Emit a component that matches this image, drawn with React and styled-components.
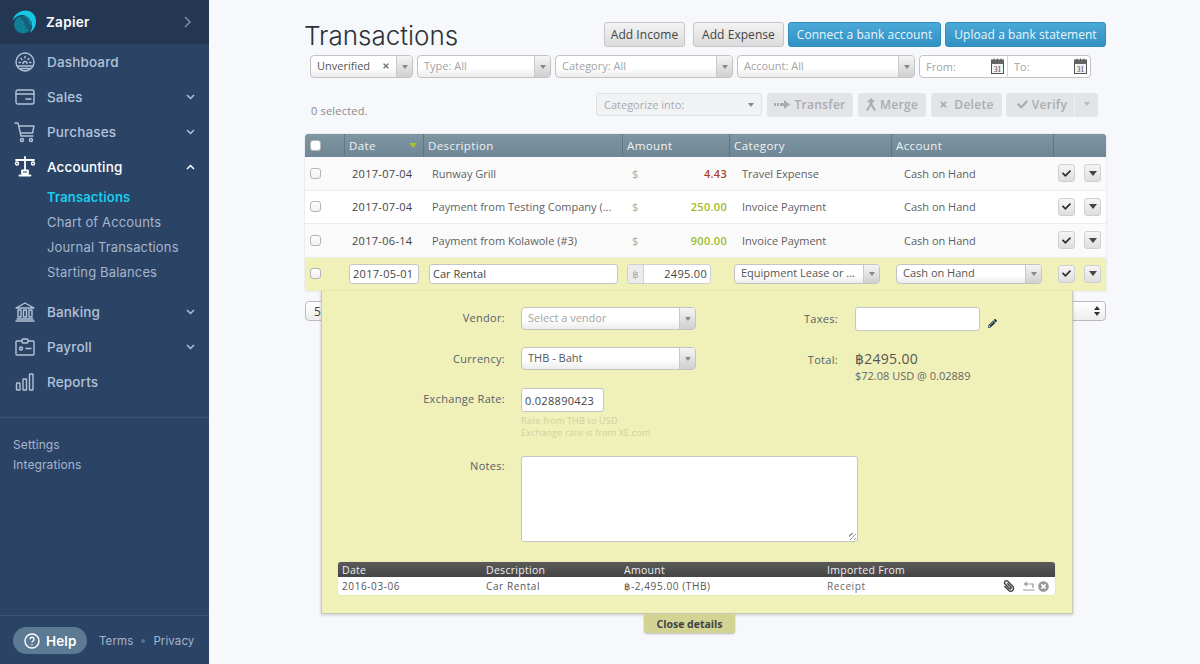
import React from 'react'
import styled, { createGlobalStyle } from 'styled-components'
import { FaCheck, FaTimes, FaPencilAlt, FaPaperclip, FaTimesCircle } from 'react-icons/fa'

const GlobalStyle = createGlobalStyle`
  html, body { margin: 0; padding: 0; height: 100%; overflow: hidden; }
  body { background: #f7f8fb; font-family: 'Open Sans', 'DejaVu Sans', sans-serif; font-size: 11px; color: #555; }
  #root { height: 100%; }
  * { box-sizing: border-box; }
`

const Page = styled.div`
  display: flex;
  width: 1200px;
  height: 664px;
`

/* sidebar */
const Sidebar = styled.aside`
  width: 209px;
  flex: none;
  display: flex;
  flex-direction: column;
  background: #2b4466;
  font-family: 'Inter', sans-serif;
  color: #b3c2d8;
`
const Brand = styled.div`
  height: 44px;
  padding: 0 17px 0 12px;
  display: flex;
  align-items: center;
  gap: 10px;
  background: #233753;
  color: #fff;
  font-size: 13.5px;
  font-weight: 600;
  letter-spacing: .3px;
  svg:last-child { margin-left: auto; }
`
const NavItem = styled.div`
  height: 35px;
  padding: 0 14px 0 14px;
  display: flex;
  align-items: center;
  font-size: 13.5px;
  font-weight: 500;
  letter-spacing: .15px;
  color: ${p => (p.$active ? '#fff' : '#b3c2d8')};
  svg:last-child:not(:first-child) { margin-left: auto; }
`
const NavIcon = styled.span`
  width: 22px;
  margin-right: 11px;
  display: flex;
  justify-content: center;
`
const SubItem = styled.div`
  height: 25px;
  padding-left: 47px;
  display: flex;
  align-items: center;
  font-size: 13px;
  letter-spacing: .15px;
  font-weight: ${p => (p.$active ? 600 : 400)};
  color: ${p => (p.$active ? '#17cfee' : '#a5b5cc')};
`
const SubList = styled.div`
  margin-bottom: 10px;
`
const NavTop = styled.nav`
  padding-top: .5px;
`
const Secondary = styled.div`
  margin-top: 17px;
  padding: 17px 0 0 13px;
  border-top: 1px solid #3a5476;
  font-size: 12px;
  line-height: 20px;
  letter-spacing: .1px;
  color: #a5b5cc;
`
const SideFooter = styled.div`
  margin-top: auto;
  height: 49px;
  padding: 11px 0 0 13px;
  border-top: 1px solid #3a5476;
  display: flex;
  align-items: flex-start;
  font-size: 11.5px;
  letter-spacing: .1px;
  color: #a5b5cc;
`
const HelpPill = styled.div`
  width: 74px;
  height: 27px;
  border-radius: 14px;
  background: #5c7a94;
  color: #fff;
  font-size: 13.5px;
  font-weight: 600;
  display: flex;
  align-items: center;
  gap: 6px;
  padding-left: 11px;
  margin-right: 12px;
`
const FootLinks = styled.div`
  height: 27px;
  display: flex;
  align-items: center;
  gap: 8px;
  i { width: 4px; height: 4px; border-radius: 50%; background: #56708f; }
`

/* main column */
const Main = styled.main`
  flex: 1;
  padding: 22px 94px 0 96px;
`
const TitleRow = styled.div`
  height: 25px;
  display: flex;
  align-items: center;
`
const Title = styled.h1`
  margin: 0 auto 0 -1px;
  font-family: 'Inter', sans-serif;
  font-weight: 300;
  font-size: 26px;
  color: #2b3138;
  line-height: 25px;
  position: relative;
  top: 1px;
`
const Button = styled.button`
  height: 25px;
  width: ${p => p.$w}px;
  margin-left: ${p => p.$ml ?? 4}px;
  padding: 0;
  border-radius: 3px;
  font: 12px 'Open Sans', sans-serif;
  letter-spacing: .05px;
  white-space: nowrap;
  color: ${p => (p.$blue ? '#eaf6fc' : '#444')};
  border: 1px solid ${p => (p.$blue ? '#2f8fbf' : '#c6c6c6')};
  background: ${p => (p.$blue ? 'linear-gradient(#4aa9d8, #3191c4)' : 'linear-gradient(#f3f3f3, #dcdcdc)')};
`
const FilterRow = styled.div`
  margin-top: 8px;
  padding-left: 5px;
  height: 23px;
  display: flex;
  gap: 4px;
`
const SelectBox = styled.div`
  width: ${p => p.$w}px;
  height: ${p => p.$h ?? 23}px;
  flex: none;
  display: flex;
  align-items: stretch;
  border: 1px solid #c3c3c3;
  border-radius: 4px;
  overflow: hidden;
  background: linear-gradient(#fff 55%, #ececec);
  font-size: 11px;
  color: ${p => (p.$muted ? '#a3a3a3' : '#555')};
`
const SelectText = styled.span`
  flex: 1;
  min-width: 0;
  padding: 0 0 2px 6px;
  display: flex;
  align-items: center;
  white-space: nowrap;
  svg { margin-left: auto; margin-right: 6px; color: #777; }
`
const SelectArrow = styled.span`
  width: 16px;
  flex: none;
  display: flex;
  align-items: center;
  justify-content: center;
  border-left: 1px solid #c9c9c9;
  background: linear-gradient(#f5f5f5, #cfcfcf);
  &::after {
    content: '';
    border: 3px solid transparent;
    border-top: 4px solid #888;
    border-bottom: 0;
  }
`
const DateRange = styled.div`
  width: 172px;
  height: 23px;
  display: grid;
  grid-template-columns: 87px 1fr;
  border: 1px solid #c3c3c3;
  border-radius: 4px;
  background: #fff;
  color: #a3a3a3;
`
const DateCell = styled.span`
  display: flex;
  align-items: center;
  justify-content: space-between;
  padding: 0 3px 1px 6px;
  & + & { border-left: 1px solid #d5d5d5; }
`
const Toolbar = styled.div`
  margin-top: 14px;
  padding-right: 8px;
  height: 25px;
  display: flex;
  align-items: center;
`
const Selected = styled.span`
  margin: 12px auto 0 6px;
  letter-spacing: .2px;
  color: #8a8a8a;
`
const CategorizeBox = styled.div`
  width: 166px;
  height: 23px;
  display: flex;
  align-items: center;
  justify-content: space-between;
  padding: 0 7px;
  border: 1px solid #e0e1e3;
  border-radius: 3px;
  background: #f1f2f4;
  color: #a9abad;
  &::after {
    content: '';
    border: 3px solid transparent;
    border-top: 4px solid #888;
    border-bottom: 0;
  }
`
const GhostButton = styled.div`
  width: ${p => p.$w}px;
  height: 24px;
  margin-left: ${p => p.$ml ?? 5}px;
  padding: 0 0 1px ${p => p.$pl ?? 0}px;
  display: flex;
  align-items: center;
  justify-content: center;
  gap: ${p => p.$gap ?? 4}px;
  background: #e3e4e7;
  border-radius: ${p => p.$radius ?? '3px'};
  border-left: ${p => (p.$split ? '1px solid #eeeff1' : '0')};
  font-size: 12px;
  font-weight: 600;
  letter-spacing: .3px;
  color: #a8acb0;
  i {
    border: 3px solid transparent;
    border-top: 4px solid #b5b8bc;
    border-bottom: 0;
  }
`

/* transactions table */
const COLUMNS = '39px 79px 199px 107px 162px 162px 53px'

const TableWrap = styled.div`
  margin-top: 17px;
`
const TableBlock = styled.div`
  position: relative;
`
const Table = styled.div`
  border-radius: 4px 4px 0 4px;
  overflow: hidden;
  box-shadow: 0 0 2px rgba(0, 0, 0, .18);
`
const HeadRow = styled.div`
  display: grid;
  grid-template-columns: ${COLUMNS};
  height: 23px;
  background-color: #748b99;
  background-image:
    repeating-linear-gradient(90deg, rgba(255, 255, 255, .04) 0 1px, transparent 1px 2px),
    linear-gradient(#7c93a0, #6c8493);
  color: #eef2f4;
  font-size: 11.5px;
  letter-spacing: .4px;
`
const HeadCell = styled.div`
  display: flex;
  align-items: center;
  justify-content: space-between;
  padding: 0 6px 0 4px;
  &:first-child { padding-left: 5px; }
  & + & { border-left: 1px solid #5f7787; }
  i {
    border: 4px solid transparent;
    border-top: 5px solid #a5c52c;
    border-bottom: 0;
  }
`
const Row = styled.div`
  display: grid;
  grid-template-columns: ${COLUMNS};
  height: 33.5px;
  align-items: center;
  background: ${p => (p.$edit ? '#f0f1b8' : p.$odd ? '#fafafa' : '#fff')};
  border-bottom: 1px solid ${p => (p.$edit ? '#f0f1b8' : '#ececec')};
  color: #5f5f5f;
`
const Check = styled.span`
  display: block;
  width: 11px;
  height: 11px;
  margin-left: ${p => p.$ml ?? 5}px;
  border: 1px solid #b5b5b5;
  border-radius: 3px;
  background: ${p => (p.$head ? '#fff' : 'linear-gradient(#fff, #f0f0f0)')};
`
const DateText = styled.span`
  padding-left: 8px;
  letter-spacing: .3px;
  color: #444;
`
const DescText = styled.span`
  padding-left: 9px;
  white-space: nowrap;
`
const AmountCell = styled.div`
  display: flex;
  justify-content: space-between;
  padding: 0 2px 0 10px;
  font-weight: 600;
  letter-spacing: .3px;
  color: ${p => p.$color};
  em { font-style: normal; font-weight: 400; color: #a9a9a9; }
`
const PlainCell = styled.span`
  padding-left: 13px;
  white-space: nowrap;
`
const ActionCell = styled.div`
  display: flex;
  gap: 9px;
  padding-left: 5px;
`
const IconButton = styled.span`
  width: 17px;
  height: 18px;
  display: flex;
  align-items: center;
  justify-content: center;
  border: 1px solid #cfcfcf;
  border-radius: 3px;
  background: linear-gradient(#f6f6f6, #dedede);
  color: #333;
  i {
    border: 4px solid transparent;
    border-top: 5px solid #444;
    border-bottom: 0;
  }
`
const TextField = styled.div`
  width: ${p => p.$w}px;
  height: ${p => p.$h ?? 20}px;
  margin-left: ${p => p.$ml ?? 0}px;
  display: flex;
  align-items: center;
  padding: 0 3px;
  background: #fff;
  border: 1px solid #c5c5c5;
  border-radius: 3px;
  font-size: 11px;
  letter-spacing: ${p => p.$ls ?? 0}px;
  color: #444;
  white-space: nowrap;
`
const AmountField = styled.div`
  width: 84px;
  height: 20px;
  margin-left: 5px;
  display: flex;
  border: 1px solid #cfcfcf;
  border-radius: 3px;
  overflow: hidden;
`
const AmountPrefix = styled.span`
  width: 16px;
  display: flex;
  align-items: center;
  justify-content: center;
  background: #ececec;
  border-right: 1px solid #cfcfcf;
  color: #aaa;
  font-size: 10px;
`
const AmountInput = styled.span`
  flex: 1;
  display: flex;
  align-items: center;
  justify-content: flex-end;
  padding-right: 3px;
  background: #fff;
  letter-spacing: .3px;
  color: #444;
`
const SelectSlot = styled.div`
  padding-left: ${p => p.$pl}px;
`

/* pagination sits under the open details panel */
const Pager = styled.div`
  margin-top: 10px;
  display: flex;
  justify-content: space-between;
`
const PagerSelect = styled.div`
  width: ${p => p.$w}px;
  height: 20px;
  display: flex;
  align-items: center;
  justify-content: ${p => (p.$end ? 'flex-end' : 'flex-start')};
  padding: 0 5px 0 8px;
  border: 1px solid #bbb;
  border-radius: 4px;
  background: linear-gradient(#fff, #ededed);
  font-size: 12px;
  color: #444;
`
const Stepper = styled.span`
  display: flex;
  flex-direction: column;
  gap: 2px;
  &::before {
    content: '';
    border: 3px solid transparent;
    border-bottom: 4px solid #333;
    border-top: 0;
  }
  &::after {
    content: '';
    border: 3px solid transparent;
    border-top: 4px solid #333;
    border-bottom: 0;
  }
`

/* details panel */
const Overlay = styled.div`
  position: absolute;
  top: 100%;
  left: 16px;
  width: 752px;
`
const Panel = styled.div`
  padding: 16px 17px 18px 16px;
  background: #f0f1b8;
  border: 1px solid #c9c9b4;
  border-top: 0;
  box-shadow: 0 1px 3px rgba(0, 0, 0, .2);
`
const Columns = styled.div`
  display: flex;
`
const LeftCol = styled.div`
  width: 424px;
`
const FormRow = styled.div`
  display: grid;
  grid-template-columns: 167px 1fr;
  column-gap: 16px;
  align-items: ${p => (p.$top ? 'start' : 'center')};
  margin-bottom: ${p => p.$mb ?? 17}px;
`
const Label = styled.label`
  text-align: right;
  font-size: 11px;
  letter-spacing: .3px;
  color: #56606a;
  padding-top: ${p => p.$pt ?? 0}px;
  padding-bottom: ${p => p.$pb ?? 0}px;
`
const Hint = styled.div`
  margin-top: 3px;
  font-size: 9px;
  line-height: 12px;
  letter-spacing: .2px;
  color: #cfd0a2;
`
const RightCol = styled.div`
  flex: 1;
`
const RightRow = styled.div`
  display: flex;
  align-items: flex-start;
  margin-bottom: ${p => p.$mb ?? 0}px;
  color: #56606a;
  font-size: 11px;
`
const RightLabel = styled.span`
  width: 76px;
  margin-right: 17px;
  flex: none;
  text-align: right;
  letter-spacing: .3px;
  padding-top: ${p => p.$pt ?? 0}px;
`
const Pencil = styled.span`
  margin: 12px 0 0 8px;
  color: #1f3550;
  display: flex;
`
const TotalBig = styled.div`
  font-size: 14px;
  line-height: 16px;
  letter-spacing: .3px;
  color: #555;
`
const TotalSmall = styled.div`
  margin-top: 2px;
  font-size: 11px;
  line-height: 14px;
  color: #666;
`
const NotesBox = styled.div`
  width: 337px;
  height: 86px;
  position: relative;
  background: #fff;
  border: 1px solid #c5c5c5;
  border-radius: 3px;
  &::after {
    content: '';
    position: absolute;
    right: 1px;
    bottom: 1px;
    width: 7px;
    height: 7px;
    background: repeating-linear-gradient(135deg, transparent 0 2px, #999 2px 3px);
  }
`
const MINI_COLUMNS = '144px 138px 203px 1fr'

const MiniTable = styled.div`
  margin-top: 20px;
  border-radius: 3px;
  overflow: hidden;
  box-shadow: 0 0 1px rgba(0, 0, 0, .25);
`
const MiniHead = styled.div`
  display: grid;
  grid-template-columns: ${MINI_COLUMNS};
  height: 15px;
  padding-left: 4px;
  align-items: center;
  background: linear-gradient(#5a5a5a, #454545);
  color: #eee;
  font-size: 10.5px;
  letter-spacing: .3px;
`
const MiniRow = styled.div`
  display: grid;
  grid-template-columns: ${MINI_COLUMNS};
  height: 18px;
  padding-left: 4px;
  align-items: center;
  background: #fff;
  font-size: 10px;
  letter-spacing: .6px;
  color: #555;
`
const ReceiptCell = styled.div`
  display: flex;
  align-items: center;
  padding-right: 6px;
  color: #666;
  span { margin-right: auto; }
  svg { flex: none; }
  svg:first-of-type { transform: scaleX(-1); margin-right: 8px; }
  svg:nth-of-type(2) { margin-right: 3px; }
`
const CloseTab = styled.div`
  width: 91px;
  height: 19px;
  margin: 0 0 0 323px;
  display: flex;
  align-items: center;
  justify-content: center;
  background: #d3d394;
  border-radius: 0 0 3px 3px;
  box-shadow: 0 1px 2px rgba(0, 0, 0, .25);
  font-size: 10.5px;
  font-weight: 700;
  color: #3e4248;
`

/* drawings */
const Stroke = ({ w = 22, h = 22, children }) => (
  <svg width={w} height={h} viewBox={`0 0 ${w} ${h}`} fill="none" stroke="currentColor" strokeWidth="1.4" strokeLinecap="round" strokeLinejoin="round">
    {children}
  </svg>
)
const Logo = () => (
  <svg width="24" height="24" viewBox="0 0 24 24">
    <circle cx="11" cy="14.500" r="9" fill="#0e7f95" />
    <path d="M7 6.500c4-1.500 8 .5 9 4 .8 3 2 5 4.500 5.500-.5 1.500-1.500 3-3 4-3-1-4.500-3.500-5-6-.5-3-3-5-5.500-7.500z" fill="#233753" opacity=".45" />
    <path d="M.5 11C2 4 8 .5 13.500.5 19.500.5 24 5 24 11c0 5.500-2.500 9.500-6.500 12 2.500-3.500 3.500-8 1.500-12C17 7 13 4.500 9 5 5.500 5.500 2.500 8 .5 11z" fill="#17c6e2" />
  </svg>
)
const Chevron = ({ up }) => (
  <svg width="9" height="6" viewBox="0 0 9 6" fill="none" stroke={up ? '#fff' : '#b3c2d8'} strokeWidth="1.500">
    <path d={up ? 'M1 5l3.500-3.500L8 5' : 'M1 1l3.500 3.500L8 1'} />
  </svg>
)
const DashboardIcon = () => (
  <Stroke>
    <circle cx="11" cy="11" r="9" />
    <path d="M4 15h14M6.500 17.500h9M11 5.500v1.500M7 7.500l1 1M15 7.500l-1 1M5 11.500h1.500M15.500 11.500H17M9 12.500a2 2 0 014 0" />
  </Stroke>
)
const SalesIcon = () => (
  <Stroke w={20} h={16}>
    <rect x="1" y="1" width="18" height="14" rx="2" />
    <path d="M1 5h18M11 10h5" />
  </Stroke>
)
const CartIcon = () => (
  <Stroke>
    <path d="M1 2h3l3 13h12M5 5h15l-1.500 7H7" />
    <circle cx="8" cy="19" r="1.500" />
    <circle cx="17" cy="19" r="1.500" />
  </Stroke>
)
const ScalesIcon = () => (
  <Stroke>
    <path d="M11 1v13M2 4h18" strokeWidth="1.800" />
    <circle cx="3" cy="7.500" r="1.500" />
    <circle cx="19" cy="7.500" r="1.500" />
    <path d="M8 14.500h6v3H8zM5.500 19.500h11" strokeWidth="1.800" />
  </Stroke>
)
const BankIcon = () => (
  <Stroke w={20} h={20}>
    <path d="M1 6l9-5 9 5zM1 19h18M2 17h16" />
    <rect x="3" y="8" width="3" height="7" />
    <rect x="8.500" y="8" width="3" height="7" />
    <rect x="14" y="8" width="3" height="7" />
  </Stroke>
)
const BadgeIcon = () => (
  <Stroke w={20} h={18}>
    <path d="M7 3H2a1 1 0 00-1 1v12a1 1 0 001 1h16a1 1 0 001-1V4a1 1 0 00-1-1h-5" />
    <rect x="7" y="1" width="6" height="4" rx="1" />
    <circle cx="6" cy="10.500" r="1.500" />
    <path d="M11 10.500h5" />
  </Stroke>
)
const BarsIcon = () => (
  <Stroke w={20} h={18}>
    <rect x="1.500" y="10" width="3.500" height="7" rx=".5" />
    <rect x="8" y="6" width="3.500" height="11" rx=".5" />
    <rect x="14.500" y="1" width="3.500" height="16" rx=".5" />
  </Stroke>
)
const CalendarIcon = () => (
  <svg width="13" height="16" viewBox="0 0 13 16">
    <rect x=".5" y="2" width="12" height="13.500" fill="#f4f4f4" stroke="#555" />
    <rect x=".5" y="2" width="12" height="4" fill="#666" />
    <path d="M3 .5v3M6.500 .5v3M10 .5v3" stroke="#555" />
    <text x="6.500" y="13.500" fontSize="7.500" fontFamily="Liberation Serif, serif" textAnchor="middle" fill="#333">31</text>
  </svg>
)
const HelpCircle = () => (
  <svg width="16" height="16" viewBox="0 0 16 16" fill="none" stroke="#fff" strokeWidth="1.400">
    <circle cx="8" cy="8" r="7" />
    <path d="M6 6.300a2 2 0 113 1.700c-.8.500-1 .9-1 1.600M8 11.300v.9" />
  </svg>
)
const TransferIcon = () => (
  <svg width="16" height="9" viewBox="0 0 16 9" fill="#a8acb0">
    <rect x="0" y="3" width="2" height="3" />
    <rect x="3" y="3" width="2" height="3" />
    <path d="M6 3h4V0l6 4.500L10 9V6H6z" />
  </svg>
)
const MergeIcon = () => (
  <svg width="10" height="13" viewBox="0 0 10 13" fill="#a8acb0">
    <path d="M5 0l4 4H6.500v2.500L10 12l-1.500 1L5 8 1.500 13 0 12l3.500-5.500V4H1z" />
  </svg>
)
const ReturnIcon = () => (
  <svg width="12" height="10" viewBox="0 0 12 10" fill="none" stroke="#999" strokeWidth="1.200">
    <path d="M0 9h11.500M4 1L1.500 3 4 5M2 3h8v4" />
  </svg>
)

const rows = [
  { date: '2017-07-04', desc: 'Runway Grill', amount: '4.43', color: '#a5432f', category: 'Travel Expense', odd: true },
  { date: '2017-07-04', desc: 'Payment from Testing Company (...', amount: '250.00', color: '#9dbb2a', category: 'Invoice Payment' },
  { date: '2017-06-14', desc: 'Payment from Kolawole (#3)', amount: '900.00', color: '#9dbb2a', category: 'Invoice Payment', odd: true },
]

const RowActions = () => (
  <ActionCell>
    <IconButton><FaCheck size={9} /></IconButton>
    <IconButton><i /></IconButton>
  </ActionCell>
)

export default function App() {
  return (
    <Page>
      <GlobalStyle />
      <Sidebar>
        <Brand>
          <Logo />
          Zapier
          <svg width="8" height="12" viewBox="0 0 8 12" fill="none" stroke="#7f8ea3" strokeWidth="1.500"><path d="M1 1l5 5-5 5" /></svg>
        </Brand>
        <NavTop>
          <NavItem><NavIcon><DashboardIcon /></NavIcon>Dashboard</NavItem>
          <NavItem><NavIcon><SalesIcon /></NavIcon>Sales<Chevron /></NavItem>
          <NavItem><NavIcon><CartIcon /></NavIcon>Purchases<Chevron /></NavItem>
          <NavItem $active><NavIcon><ScalesIcon /></NavIcon>Accounting<Chevron up /></NavItem>
          <SubList>
            <SubItem $active>Transactions</SubItem>
            <SubItem>Chart of Accounts</SubItem>
            <SubItem>Journal Transactions</SubItem>
            <SubItem>Starting Balances</SubItem>
          </SubList>
          <NavItem><NavIcon><BankIcon /></NavIcon>Banking<Chevron /></NavItem>
          <NavItem><NavIcon><BadgeIcon /></NavIcon>Payroll<Chevron /></NavItem>
          <NavItem><NavIcon><BarsIcon /></NavIcon>Reports</NavItem>
        </NavTop>
        <Secondary>
          <div>Settings</div>
          <div>Integrations</div>
        </Secondary>
        <SideFooter>
          <HelpPill><HelpCircle />Help</HelpPill>
          <FootLinks>Terms<i />Privacy</FootLinks>
        </SideFooter>
      </Sidebar>

      <Main>
        <TitleRow>
          <Title>Transactions</Title>
          <Button $w={81}>Add Income</Button>
          <Button $w={91} $ml={8}>Add Expense</Button>
          <Button $w={153} $blue>Connect a bank account</Button>
          <Button $w={161} $blue>Upload a bank statement</Button>
        </TitleRow>

        <FilterRow>
          <SelectBox $w={103}><SelectText>Unverified<FaTimes size={8} /></SelectText><SelectArrow /></SelectBox>
          <SelectBox $w={134} $muted><SelectText>Type: All</SelectText><SelectArrow /></SelectBox>
          <SelectBox $w={178} $muted><SelectText>Category: All</SelectText><SelectArrow /></SelectBox>
          <SelectBox $w={178} $muted><SelectText>Account: All</SelectText><SelectArrow /></SelectBox>
          <DateRange>
            <DateCell>From:<CalendarIcon /></DateCell>
            <DateCell>To:<CalendarIcon /></DateCell>
          </DateRange>
        </FilterRow>

        <Toolbar>
          <Selected>0 selected.</Selected>
          <CategorizeBox>Categorize into:</CategorizeBox>
          <GhostButton $w={86}><TransferIcon />Transfer</GhostButton>
          <GhostButton $w={68}><MergeIcon />Merge</GhostButton>
          <GhostButton $w={71} $gap={6}><FaTimes size={9} />Delete</GhostButton>
          <GhostButton $w={68} $ml={4} $pl={4} $radius="3px 0 0 3px"><FaCheck size={11} />Verify</GhostButton>
          <GhostButton $w={24} $ml={0} $split $radius="0 3px 3px 0"><i /></GhostButton>
        </Toolbar>

        <TableWrap>
          <TableBlock>
            <Table>
              <HeadRow>
                <HeadCell><Check $head $ml={0} /></HeadCell>
                <HeadCell>Date<i /></HeadCell>
                <HeadCell>Description</HeadCell>
                <HeadCell>Amount</HeadCell>
                <HeadCell>Category</HeadCell>
                <HeadCell>Account</HeadCell>
                <HeadCell />
              </HeadRow>
              {rows.map(r => (
                <Row key={r.desc} $odd={r.odd}>
                  <Check />
                  <DateText>{r.date}</DateText>
                  <DescText>{r.desc}</DescText>
                  <AmountCell $color={r.color}><em>$</em>{r.amount}</AmountCell>
                  <PlainCell>{r.category}</PlainCell>
                  <PlainCell>Cash on Hand</PlainCell>
                  <RowActions />
                </Row>
              ))}
              <Row $edit>
                <Check />
                <TextField $w={70} $ml={5} $ls={.3}>2017-05-01</TextField>
                <TextField $w={189} $ml={6}>Car Rental</TextField>
                <AmountField>
                  <AmountPrefix>฿</AmountPrefix>
                  <AmountInput>2495.00</AmountInput>
                </AmountField>
                <SelectSlot $pl={5}>
                  <SelectBox $w={146} $h={20}><SelectText>Equipment Lease or ...</SelectText><SelectArrow /></SelectBox>
                </SelectSlot>
                <SelectSlot $pl={5}>
                  <SelectBox $w={146} $h={20}><SelectText>Cash on Hand</SelectText><SelectArrow /></SelectBox>
                </SelectSlot>
                <RowActions />
              </Row>
            </Table>

            <Overlay>
              <Panel>
                <Columns>
                  <LeftCol>
                    <FormRow>
                      <Label $pb={2}>Vendor:</Label>
                      <SelectBox $w={175} $muted><SelectText>Select a vendor</SelectText><SelectArrow /></SelectBox>
                    </FormRow>
                    <FormRow $mb={18}>
                      <Label>Currency:</Label>
                      <SelectBox $w={175}><SelectText>THB - Baht</SelectText><SelectArrow /></SelectBox>
                    </FormRow>
                    <FormRow $top $mb={17}>
                      <Label $pt={3}>Exchange Rate:</Label>
                      <div>
                        <TextField $w={83} $h={24} $ls={.3}>0.028890423</TextField>
                        <Hint>Rate from THB to USD<br />Exchange rate is from XE.com</Hint>
                      </div>
                    </FormRow>
                  </LeftCol>
                  <RightCol>
                    <RightRow $mb={20}>
                      <RightLabel $pt={4}>Taxes:</RightLabel>
                      <TextField $w={125} $h={24} />
                      <Pencil><FaPencilAlt size={9} /></Pencil>
                    </RightRow>
                    <RightRow>
                      <RightLabel $pt={1}>Total:</RightLabel>
                      <div>
                        <TotalBig>฿2495.00</TotalBig>
                        <TotalSmall>$72.08 USD @ 0.02889</TotalSmall>
                      </div>
                    </RightRow>
                  </RightCol>
                </Columns>
                <FormRow $top $mb={0}>
                  <Label $pt={2}>Notes:</Label>
                  <NotesBox />
                </FormRow>
                <MiniTable>
                  <MiniHead>
                    <span>Date</span>
                    <span>Description</span>
                    <span>Amount</span>
                    <span>Imported From</span>
                  </MiniHead>
                  <MiniRow>
                    <span>2016-03-06</span>
                    <span>Car Rental</span>
                    <span>฿-2,495.00 (THB)</span>
                    <ReceiptCell>
                      <span>Receipt</span>
                      <FaPaperclip size={12} color="#444" />
                      <ReturnIcon />
                      <FaTimesCircle size={11} color="#999" />
                    </ReceiptCell>
                  </MiniRow>
                </MiniTable>
              </Panel>
              <CloseTab>Close details</CloseTab>
            </Overlay>
          </TableBlock>

          <Pager>
            <PagerSelect $w={40}>5</PagerSelect>
            <PagerSelect $w={66} $end><Stepper /></PagerSelect>
          </Pager>
        </TableWrap>
      </Main>
    </Page>
  )
}
